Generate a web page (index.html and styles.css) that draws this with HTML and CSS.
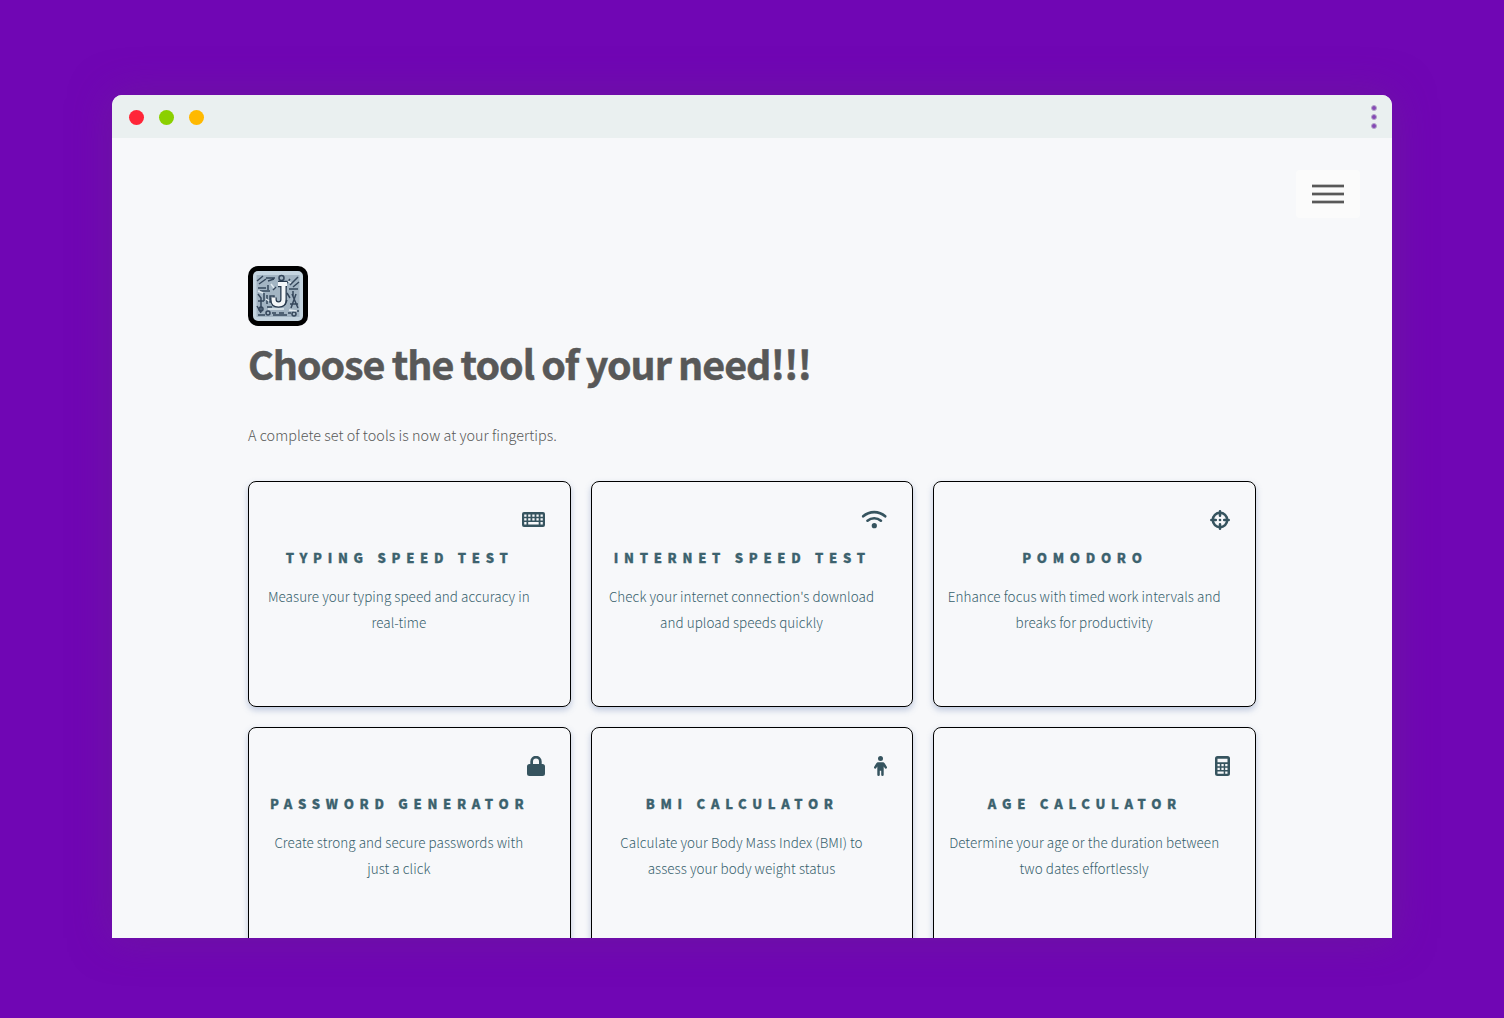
FILE: index.html
```html
<!DOCTYPE html>
<html lang="en">
<head>
<meta charset="utf-8">
<title>Choose the tool of your need</title>
<link rel="stylesheet" href="styles.css">
</head>
<body>
<div class="window">
  <header class="titlebar">
    <div class="lights"><i class="light red"></i><i class="light green"></i><i class="light amber"></i></div>
    <div class="dots"><i></i><i></i><i></i></div>
  </header>
  <main class="page">
    <nav class="nav"><button class="menu" aria-label="Menu"><i></i><i></i><i></i></button></nav>
    <div class="inner">
      <svg class="logo" viewBox="0 0 60 60" width="60" height="60">
        <rect width="60" height="60" rx="10" fill="#000"/>
        <rect x="5" y="5" width="50" height="50" rx="5" fill="#c4d4df"/>
        <rect x="8.500" y="9" width="43" height="42" fill="#a3b5c3"/>
        <g fill="none" stroke="#35475b" stroke-width="1.500">
          <path d="M9 15l6-5M11 18l7-5M18 12h9M20 15l6-2M42 19l8-8M45 21l6-5M38 18l4-5M10 22h8M12 25h10M20 19v5M10 28l3 4v14M16 27v8M19 29v9M10 35h6M22 30h4v6h-4zM19 41h5M9 40l4 7M48 28l-5 14M44 28l6 14M42 38h8M41 23h9M45 25v5M10 49h7M24 47h4M31 47h5M40 47h3M47 45h4M25 49h14M28 21l-3 3M39 27l3 5M39 34l-2 5"/>
          <circle cx="33.500" cy="12" r="2.500"/><circle cx="20" cy="47" r="2"/><circle cx="13" cy="43" r="2"/><circle cx="46" cy="48" r="2"/>
        </g>
        <path d="M20 43h16M10 25l5 2M23 18l3 4M18 33l3 2M41 44l8 1M40 15l3 2" stroke="#e1eaf0" stroke-width="1.500"/>
        <path d="M30 18h9M35.500 18v15.500q0 5-5 5-5 0-5-5v-2" fill="none" stroke="#26384c" stroke-width="6.500"/>
        <path d="M30 18h9M35.500 18v15.500q0 5-5 5-5 0-5-5v-2" fill="none" stroke="#f3f6f8" stroke-width="4"/>
      </svg>
      <h1>Choose the tool of your need!!!</h1>
      <p class="lead">A complete set of tools is now at your fingertips.</p>
      <section class="tiles">
        <article class="tile">
          <svg class="icon" viewBox="0 0 23 20" width="23" height="20"><path fill-rule="evenodd" d="M2 2h19a2 2 0 0 1 2 2v11a2 2 0 0 1-2 2H2a2 2 0 0 1-2-2v-11a2 2 0 0 1 2-2zM2.200 4.500v2.300h2.300V4.500zm4 0v2.300h2.300V4.500zm4.100 0v2.300h2.300V4.500zm4.100 0v2.300h2.300V4.500zm4.100 0v2.300h2.300V4.500zM2.200 8.200v2.300h2.300V8.200zm4 0v2.300h2.300V8.200zm4.100 0v2.300h2.300V8.200zm4.100 0v2.300h2.300V8.200zm4.100 0v2.300h2.300V8.200zM2.200 12.100v2.300h2.300v-2.300zm4 0v2.300h10.500v-2.300zm12.300 0v2.300h2.300v-2.300z"/></svg>
          <h2>Typing Speed Test</h2>
          <p>Measure your typing speed and accuracy in<br>real-time</p>
        </article>
        <article class="tile">
          <svg class="icon" viewBox="0 0 26 20" width="26" height="20"><g fill="none" stroke="#36545f" stroke-width="2.600" stroke-linecap="round"><path d="M2.200 6.300a16.500 16.500 0 0 1 22 0M6.500 10.700a10.200 10.200 0 0 1 13.400 0"/></g><circle cx="13.300" cy="15.700" r="2.600"/></svg>
          <h2>Internet Speed Test</h2>
          <p>Check your internet connection's download<br>and upload speeds quickly</p>
        </article>
        <article class="tile">
          <svg class="icon" viewBox="0 0 20 20" width="20" height="20"><g fill="none" stroke="#36545f" stroke-width="2.500"><circle cx="10" cy="10" r="7.200"/><path stroke-linecap="round" d="M10 1.300v4.500M10 14.200v4.500M1.300 10h4.500M14.200 10h4.500"/></g><circle cx="10" cy="10" r="1.350"/></svg>
          <h2>Pomodoro</h2>
          <p>Enhance focus with timed work intervals and<br>breaks for productivity</p>
        </article>
        <article class="tile">
          <svg class="icon" viewBox="0 0 18 20" width="18" height="20"><path fill-rule="evenodd" d="M3.300 8V5.500a5.700 5.700 0 0 1 11.400 0V8h.8A2.500 2.500 0 0 1 18 10.500v7a2.500 2.500 0 0 1-2.500 2.500h-13A2.500 2.500 0 0 1 0 17.500v-7A2.500 2.500 0 0 1 2.500 8zM6 8h6V5.500a3 3 0 0 0-6 0z"/></svg>
          <h2>Password Generator</h2>
          <p>Create strong and secure passwords with<br>just a click</p>
        </article>
        <article class="tile">
          <svg class="icon" viewBox="0 0 13 20" width="13" height="20"><circle cx="6.500" cy="2.500" r="2.500"/><path d="M4.500 6.200h4c1 0 1.800.5 2.300 1.200l2 3.300a1.250 1.250 0 0 1-2.100 1.400l-1-1.500v8.100a1.250 1.250 0 0 1-2.500 0v-3.900H5.800v3.900a1.250 1.250 0 0 1-2.500 0v-8.100l-1 1.500a1.250 1.250 0 0 1-2.100-1.400l2-3.300c.5-.7 1.300-1.200 2.300-1.200z"/></svg>
          <h2>BMI Calculator</h2>
          <p>Calculate your Body Mass Index (BMI) to<br>assess your body weight status</p>
        </article>
        <article class="tile">
          <svg class="icon" viewBox="0 0 15 20" width="15" height="20"><path fill-rule="evenodd" d="M2.500 0h10A2.500 2.500 0 0 1 15 2.500v15a2.500 2.500 0 0 1-2.500 2.500h-10A2.500 2.500 0 0 1 0 17.500v-15A2.500 2.500 0 0 1 2.500 0zM2.500 2.700v3.500h10V2.700zM2.500 8v2.300h2.300V8zm3.900 0v2.300h2.300V8zm3.800 0v2.300h2.300V8zM2.500 11.800v2.300h2.300v-2.300zm3.900 0v2.300h2.300v-2.300zm3.800 0v2.300h2.300v-2.300zM2.500 15.500v2.200h6.200v-2.200zm7.700 0v2.200h2.300v-2.200z"/></svg>
          <h2>Age Calculator</h2>
          <p>Determine your age or the duration between<br>two dates effortlessly</p>
        </article>
      </section>
    </div>
  </main>
</div>
</body>
</html>
```
FILE: styles.css
```css
* { box-sizing: border-box; }
body {
  margin: 0;
  height: 1018px;
  padding: 95px 112px 80px;
  overflow: hidden;
  background: #7006b4;
  font-family: "Noto Sans CJK JP", "Noto Sans CJK SC", sans-serif;
  font-weight: 300;
}
.window {
  display: flex;
  flex-direction: column;
  height: 843px;
  overflow: hidden;
  border-radius: 10px 10px 0 0;
  background: #f7f8fa;
  box-shadow: 0 0 40px rgba(105, 40, 140, .5);
}
.titlebar {
  flex: none;
  display: flex;
  justify-content: space-between;
  align-items: center;
  height: 43px;
  padding: 0 15px 0 16.600px;
  background: #eaf0f0;
}
.lights { display: flex; gap: 15px; padding-top: 1px; }
.light { width: 15px; height: 15px; border-radius: 50%; }
.red { background: #ff2538; }
.green { background: #8bd000; }
.amber { background: #ffb900; }
.dots { display: flex; flex-direction: column; gap: 3px; }
.dots i { width: 6px; height: 6px; border-radius: 50%; background: #8548b5; border: 1px solid #b5a9c9; }
.page { display: flex; flex-direction: column; }
.nav { display: flex; justify-content: flex-end; padding: 32px 32px 0; }
.menu {
  display: flex;
  flex-direction: column;
  align-items: center;
  justify-content: center;
  gap: 4px;
  width: 64px;
  height: 48px;
  border: 0;
  border-radius: 4px;
  padding: 0;
  background: #fbfbfb;
}
.menu i { width: 32px; height: 4px; background: #585858; border: solid #c0c0c0; border-width: 1px 0; }
.inner { width: 1008px; margin: 0 auto; padding-top: 48px; }
.logo { display: block; }
h1 {
  margin: 8px 0 0;
  font-size: 39.400px;
  line-height: 58px;
  font-weight: 700;
  letter-spacing: -1.030px;
  word-spacing: -.600px;
  color: #585858;
  -webkit-text-stroke: .5px #585858;
  white-space: nowrap;
}
.lead { margin: 29px 0 0; font-size: 14.350px; line-height: 28px; letter-spacing: .050px; color: #585858; }
.tiles {
  display: grid;
  grid-template-columns: repeat(3, minmax(0, 1fr));
  grid-auto-rows: 226px;
  gap: 20px;
  margin-top: 32px;
}
.tile {
  display: flex;
  flex-direction: column;
  padding: 27.500px 21px 0 0;
  border: 1px solid #000;
  border-radius: 8px;
  box-shadow: 0 3px 6px rgba(80, 110, 170, .35);
  color: #36606c;
  text-align: center;
  white-space: nowrap;
}
.icon { display: block; align-self: flex-end; margin-right: 4px; fill: #36545f; }
h2 {
  margin: 16.500px 0 0;
  padding-left: 1.500px;
  font-size: 13px;
  line-height: 24px;
  font-weight: 900;
  letter-spacing: 5.700px;
  text-transform: uppercase;
  color: #3c626e;
  -webkit-text-stroke: .3px #3c626e;
}
.tile p { margin: 13px 0 0; font-size: 13.450px; line-height: 26px; letter-spacing: .060px; }
```
